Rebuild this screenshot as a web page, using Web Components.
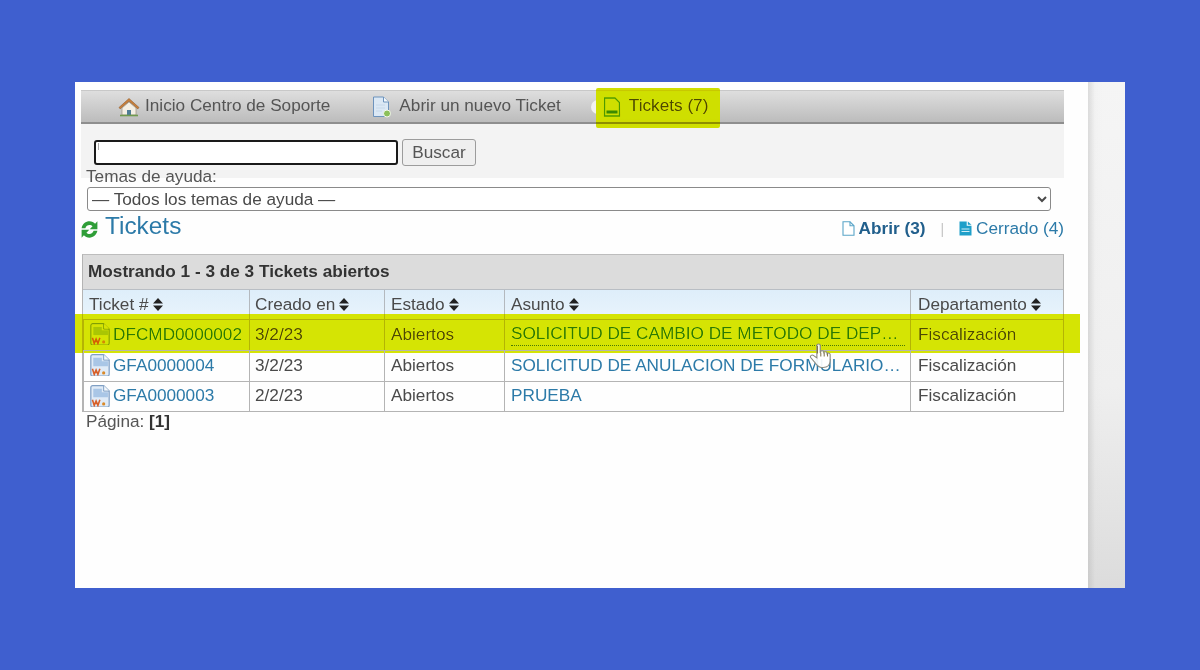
<!DOCTYPE html>
<html lang="es">
<head>
<meta charset="utf-8">
<title>Tickets</title>
<style>
  html, body { margin: 0; height: 670px; overflow: hidden; }
  body {
    background-color: #3F5FCF;
    font-family: "Liberation Sans", Arial, sans-serif;
    font-size: 17.2px;
    color: #4a4a4a;
  }
</style>
</head>
<body>
<hd-window>
  <hd-nav>
    <hd-tab icon="house">Inicio Centro de Soporte</hd-tab>
    <hd-tab icon="newticket">Abrir un nuevo Ticket</hd-tab>
    <hd-tab icon="tickets" active>Tickets (7)</hd-tab>
  </hd-nav>
  <hd-search></hd-search>
  <hd-heading></hd-heading>
  <hd-ticket-table caption="Mostrando 1 - 3 de 3 Tickets abiertos">
    <hd-ticket-row number="DFCMD0000002" created="3/2/23" status="Abiertos" subject="SOLICITUD DE CAMBIO DE METODO DE DEP…" department="Fiscalización" highlight hovered></hd-ticket-row>
    <hd-ticket-row number="GFA0000004" created="3/2/23" status="Abiertos" subject="SOLICITUD DE ANULACION DE FORMULARIO…" department="Fiscalización"></hd-ticket-row>
    <hd-ticket-row number="GFA0000003" created="2/2/23" status="Abiertos" subject="PRUEBA" department="Fiscalización"></hd-ticket-row>
  </hd-ticket-table>
  <hd-pager></hd-pager>
</hd-window>

<script>
const icons = {
  house: `<svg width="22" height="20" viewBox="0 0 22 20">
    <path d="M11 1.500 1 10.500l1.200 1.400L11 4.200l8.800 7.700 1.200-1.400z" fill="#c9803c" stroke="#8f5a2a" stroke-width=".6"/>
    <path d="M4 11 11 5l7 6v7H4z" fill="#f4efe4" stroke="#9a917f" stroke-width=".7"/>
    <path d="M9 18v-5h4v5z" fill="#4f7d96"/>
    <path d="M2 18.500h18" stroke="#6f9a4e" stroke-width="1.600"/>
  </svg>`,
  newticket: `<svg width="19" height="22" viewBox="0 0 19 22">
    <path d="M1.500 1h10l5 5v14.500h-15z" fill="#dbe8f5" stroke="#6d93bd"/>
    <path d="M11.500 1v5h5" fill="#f5f9fd" stroke="#6d93bd"/>
    <path d="M4 9h9M4 12h9M4 15h6" stroke="#c6d8ea"/>
    <circle cx="15" cy="17.500" r="3.500" fill="#8cc05a" stroke="#f4f8ee"/>
  </svg>`,
  tickets: `<svg width="18" height="20" viewBox="0 0 18 20">
    <path d="M1.500 1h10.500l4.500 4.500v13.500h-15z" fill="#cfe08a" stroke="#4d9a3a" stroke-width="1.300"/>
    <rect x="3.500" y="13.500" width="11" height="3" fill="#3c8a34"/>
  </svg>`,
  refresh: `<svg width="17" height="17" viewBox="1.500 1.500 14 14">
    <path d="M2 7.400C2.700 3.900 5.400 1.800 8.500 1.800c2 0 3.500.8 4.600 2l1.900-2v6.400H8.700l2.300-2.300C10.400 5.200 9.600 4.800 8.500 4.800c-1.600 0-2.900 1-3.400 2.600z" fill="#2f9e38"/>
    <path d="M15 9.600C14.300 13.100 11.600 15.200 8.500 15.200c-2 0-3.500-.8-4.600-2l-1.900 2V8.800h6.300L6 11.100c.6.700 1.400 1.100 2.500 1.100 1.600 0 2.900-1 3.400-2.600z" fill="#2f9e38"/>
  </svg>`,
  pageOpen: `<svg width="13" height="15" viewBox="0 0 13 15">
    <path d="M1 .8h7l4 4v9.400H1z" fill="#fff" stroke="#5aa5c8" stroke-width="1.100"/>
    <path d="M8 .8v4h4" fill="none" stroke="#5aa5c8" stroke-width="1.100"/>
  </svg>`,
  pageClosed: `<svg width="13" height="15" viewBox="0 0 13 15">
    <path d="M.5.500h7.200v4.300H12.500v9.700H.5z" fill="#1f9fc9"/>
    <path d="M8.800.500l3.700 3.300H8.800z" fill="#1f9fc9"/>
    <path d="M2.500 8h8M2.500 10.500h8" stroke="#cfeef8"/>
  </svg>`,
  ws: `<svg width="20" height="22" viewBox="1 .5 16 18">
    <path d="M1.500 2.500a1.500 1.500 0 0 1 1.500-1.500h9l4.500 4.500v11.500a1.500 1.500 0 0 1-1.500 1.500H3a1.500 1.500 0 0 1-1.500-1.500z" fill="#e0ebf7" stroke="#7f9fc4"/>
    <path d="M12 1v4.500h4.500" fill="#f4f8fc" stroke="#7f9fc4" stroke-width=".8"/>
    <path d="M3.500 3.500h7v3h5v4h-12z" fill="#a9c6e6"/>
    <path d="M2.800 12.500l1.500 4.700 1.500-3.500 1.500 3.500 1.600-4.700" fill="none" stroke="#d8602a" stroke-width="1.300"/>
    <circle cx="12" cy="16" r="1.300" fill="#d98a2a"/>
  </svg>`,
  sort: `<svg width="10" height="13" viewBox="0 0 10 13">
    <path d="M5 0l5 5.500H0zM5 13l5-5.500H0z" fill="#222"/>
  </svg>`,
  hand: `<svg width="27" height="26" viewBox="0 0 24 27" preserveAspectRatio="none">
    <path d="M7 2.500c0-2 3-2 3 0v8l.3-1.500c.5-1.500 2.700-1.200 2.700.5l.2.500c.5-1.400 2.700-1.100 2.800.5l.1.700c.7-1.200 2.700-.8 2.700.8v6.500c0 4-2.300 7-6.300 7-3 0-4.500-1-6-3.500L1.500 15c-1-1.800 1.200-3.200 2.700-1.800L7 15.500z" fill="#fff" fill-opacity=".92" stroke="#8a8a80" stroke-width="1"/>
    <path d="M7.500 3v8M10.500 10v4M13.500 10v4M16.500 11v3" stroke="#7c6f45" stroke-width=".9" fill="none"/>
  </svg>`,
};

class HdWindow extends HTMLElement {
  constructor() {
    super();
    this.attachShadow({ mode: "open" });
  }

  connectedCallback() {
    this.shadowRoot.innerHTML = `
    <style>${windowCss}</style>
    <div class="frame">
      <main class="page"><slot></slot></main>
      <div class="gutter"></div>
    </div>
    `;
  }
}

const windowCss = `
    :host {
        display: block;
        padding: 82px 75px 0;
    }
    .frame {
        display: flex;
        height: 506px;
        overflow: hidden;
        background-color: #fefefe;
        filter: blur(0.5px);
    }
    .page {
        flex: 1;
        min-width: 0;
        padding: 8px 24px 0 6px;
    }
    .gutter {
        width: 37px;
        background:
            linear-gradient(90deg, rgba(170,170,170,0.35), rgba(220,220,220,0.1) 7px, rgba(0,0,0,0) 14px),
            linear-gradient(180deg, #f5f5f5 0%, #efefef 60%, #dcdcdc 100%);
    }
`;

class HdNav extends HTMLElement {
  constructor() {
    super();
    this.attachShadow({ mode: "open" });
    this.shadowRoot.innerHTML = `
    <style>
      :host {
        display: flex;
        align-items: center;
        gap: 18px;
        height: 31px;
        padding-left: 25px;
        background: linear-gradient(180deg, #dedede, #bcbcbc);
        border-top: 1px solid #c8c8c8;
        border-bottom: 2px solid #8e8e8e;
      }
    </style>
    <slot></slot>
    `;
  }
}

class HdTab extends HTMLElement {
  constructor() {
    super();
    this.attachShadow({ mode: "open" });
  }

  connectedCallback() {
    this.shadowRoot.innerHTML = `
    <style>${tabCss}</style>
    <a class="tab">${icons[this.getAttribute("icon")]}<slot></slot></a>
    `;
  }
}

const tabCss = `
    :host {
        display: block;
        position: relative;
        color: #555;
    }
    :host([active]) {
        color: #4a4a4a;
    }
    :host([active])::before {
        content: "";
        position: absolute;
        left: 0;
        top: 8px;
        width: 14px;
        height: 14px;
        border-radius: 7px;
        background-color: #f2f2f2;
    }
    :host([active])::after {
        content: "";
        position: absolute;
        left: 5px;
        right: 0;
        top: -4px;
        bottom: -6px;
        border-radius: 2px;
        background-color: #CFDF00;
        mix-blend-mode: darken;
    }
    :host([active]) .tab {
        background: linear-gradient(180deg, #f2f2f2, #dcdcdc) no-repeat 5px 0 / calc(100% - 5px) 100%;
    }
    .tab {
        display: flex;
        align-items: center;
        gap: 5px;
        position: relative;
        box-sizing: border-box;
        height: 30px;
        padding: 0 12px 2px;
        white-space: nowrap;
    }
    .tab svg {
        margin-top: 2px;
    }
    :host([icon="newticket"]) .tab,
    :host([icon="tickets"]) .tab {
        gap: 8px;
    }
`;

class HdSearch extends HTMLElement {
  constructor() {
    super();
    this.attachShadow({ mode: "open" });
    this.shadowRoot.innerHTML = `
    <style>
      :host {
        display: block;
        padding: 15px 13px 0 5px;
        background: linear-gradient(#f3f3f3 54px, rgba(0,0,0,0) 54px);
      }
      .row {
        display: flex;
        align-items: center;
        gap: 4px;
        padding-left: 8px;
      }
      input {
        box-sizing: border-box;
        width: 304px;
        height: 25px;
        margin: 0;
        border: 2px solid #1a1a1a;
        border-radius: 3px;
        background: linear-gradient(#aaa, #aaa) 2px 1px / 1px 7px no-repeat #fff;
        outline: none;
      }
      button {
        box-sizing: border-box;
        width: 74px;
        height: 27px;
        padding: 0;
        border: 1px solid #9c9c9c;
        border-radius: 3px;
        background-color: #efefef;
        color: #555;
        font: inherit;
      }
      label {
        display: block;
        height: 21px;
        line-height: 20px;
        color: #555;
      }
      select {
        display: block;
        box-sizing: border-box;
        width: 964px;
        height: 24px;
        margin: 0 0 0 1px;
        padding: 0;
        border: 1px solid #8a8a8a;
        border-radius: 3px;
        background-color: #fff;
        color: #4a4a4a;
        font: inherit;
      }
    </style>
    <div class="row"><input type="text" aria-label="Buscar"><button type="button">Buscar</button></div>
    <label for="topic">Temas de ayuda:</label>
    <select id="topic"><option>— Todos los temas de ayuda —</option></select>
    `;
  }
}

class HdHeading extends HTMLElement {
  constructor() {
    super();
    this.attachShadow({ mode: "open" });
    this.shadowRoot.innerHTML = `
    <style>
      :host {
        display: flex;
        justify-content: space-between;
        align-items: flex-start;
        height: 43px;
      }
      .title {
        display: flex;
        align-items: center;
        gap: 7px;
        height: 30px;
        color: #2c7aa8;
        font-size: 24.4px;
      }
      .title svg { margin-top: 6px; }
      .states {
        display: flex;
        align-items: center;
        height: 35px;
        color: #2c7aa8;
      }
      .states a {
        display: flex;
        align-items: center;
        gap: 4px;
      }
      .states b { color: #215f8c; }
      .sep {
        margin: 0 15px;
        color: #c4c4c4;
        font-size: 14px;
      }
    </style>
    <div class="title">${icons.refresh}<span>Tickets</span></div>
    <div class="states">
      <a>${icons.pageOpen}<b>Abrir (3)</b></a>
      <span class="sep">|</span>
      <a>${icons.pageClosed}<span>Cerrado (4)</span></a>
    </div>
    `;
  }
}

const columns = "166px 135px 120px 406px 153px";

class HdTicketTable extends HTMLElement {
  constructor() {
    super();
    this.attachShadow({ mode: "open" });
  }

  connectedCallback() {
    const headings = ["Ticket #", "Creado en", "Estado", "Asunto", "Departamento"];

    this.shadowRoot.innerHTML = `
    <style>${tableCss}</style>
    <div class="caption">${this.getAttribute("caption")}</div>
    <div class="head">
      ${headings.map((h) => `<div>${h} ${icons.sort}</div>`).join("")}
    </div>
    <slot></slot>
    `;
  }
}

const tableCss = `
    :host {
        display: block;
        width: 982px;
        margin-left: 1px;
        border: 1px solid #b4b4b4;
        border-top-color: #bdbdbd;
        box-sizing: border-box;
    }
    .caption {
        display: flex;
        align-items: center;
        box-sizing: border-box;
        height: 34px;
        padding: 0 0 2px 5px;
        background-color: #dcdcdc;
        color: #333;
        font-weight: bold;
    }
    .head {
        display: grid;
        grid-template-columns: ${columns};
        height: 29px;
        border-top: 1px solid #b9bec4;
        background: linear-gradient(180deg, #deeefa, #e9f4fc);
    }
    .head div {
        display: flex;
        align-items: center;
        gap: 4px;
        padding-left: 6px;
        border-left: 1px solid #b4b9be;
        color: #4a4a4a;
    }
    .head div:first-child {
        border-left: 0;
    }
    .head div:nth-child(2) {
        padding-left: 5px;
    }
    .head div:last-child {
        padding-left: 7px;
    }
`;

class HdTicketRow extends HTMLElement {
  constructor() {
    super();
    this.attachShadow({ mode: "open" });
  }

  connectedCallback() {
    const attr = (name) => this.getAttribute(name);

    this.shadowRoot.innerHTML = `
    <style>${rowCss}</style>
    <div class="cell number">${icons.ws}<a>${attr("number")}</a></div>
    <div class="cell created">${attr("created")}</div>
    <div class="cell">${attr("status")}</div>
    <div class="cell subject"><a>${attr("subject")}</a></div>
    <div class="cell department">${attr("department")}</div>
    ${this.hasAttribute("hovered") ? `<span class="hand">${icons.hand}</span>` : ""}
    `;
  }
}

const rowCss = `
    :host {
        display: grid;
        grid-template-columns: ${columns};
        position: relative;
        height: 30px;
        border-top: 1px solid #b4b4b4;
        color: #4a4a4a;
    }
    :host(:last-child) {
        height: 29px;
    }
    :host([highlight])::after {
        content: "";
        position: absolute;
        left: -8px;
        right: -17px;
        top: -6px;
        bottom: -3px;
        background-color: #D5E404;
        mix-blend-mode: darken;
    }
    .cell {
        display: flex;
        align-items: center;
        min-width: 0;
        padding: 0 0 2px 6px;
        border-left: 1px solid #b4b4b4;
        white-space: nowrap;
    }
    .cell:first-child {
        border-left: 0;
    }
    .created {
        padding-left: 5px;
    }
    .department {
        padding-left: 7px;
    }
    a {
        color: #2c7aa8;
    }
    .number {
        gap: 3px;
    }
    .subject {
        padding-right: 5px;
    }
    .subject a {
        display: block;
        flex: 1;
        min-width: 0;
        height: 23px;
        line-height: 22px;
    }
    :host([hovered]) .subject a {
        border-bottom: 1px dotted #4a7a40;
    }
    .hand {
        position: absolute;
        left: 726px;
        top: 23px;
        z-index: 2;
        line-height: 0;
    }
`;

class HdPager extends HTMLElement {
  constructor() {
    super();
    this.attachShadow({ mode: "open" });
    this.shadowRoot.innerHTML = `
    <style>
      :host {
        display: block;
        padding-left: 5px;
        color: #555;
        line-height: 19px;
      }
      b { color: #333; }
    </style>
    Página: <b>[1]</b>
    `;
  }
}

customElements.define("hd-window", HdWindow);
customElements.define("hd-nav", HdNav);
customElements.define("hd-tab", HdTab);
customElements.define("hd-search", HdSearch);
customElements.define("hd-heading", HdHeading);
customElements.define("hd-ticket-table", HdTicketTable);
customElements.define("hd-ticket-row", HdTicketRow);
customElements.define("hd-pager", HdPager);
</script>
</body>
</html>
